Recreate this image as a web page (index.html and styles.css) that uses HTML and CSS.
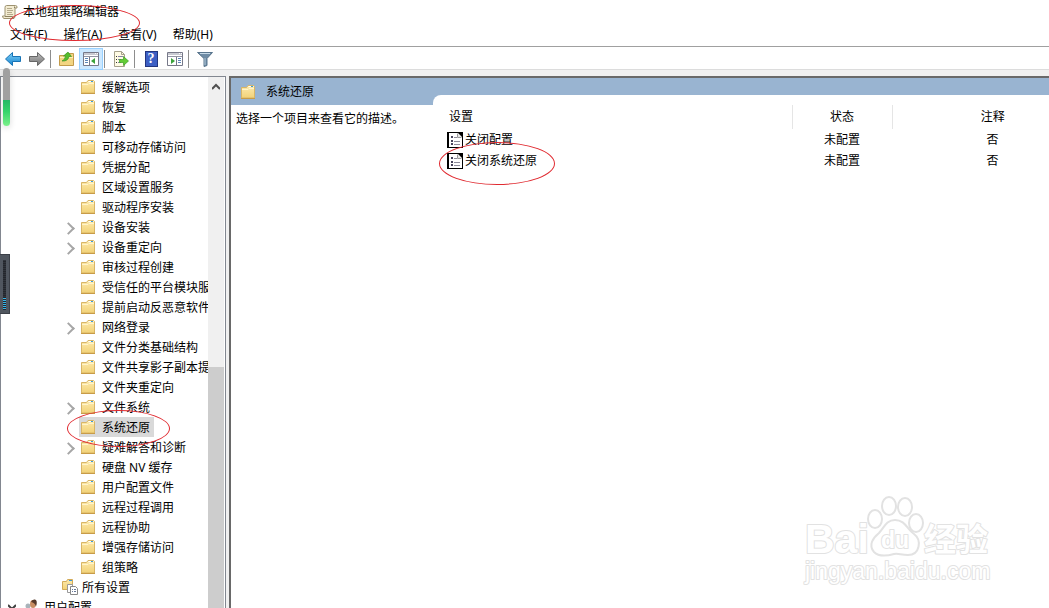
FILE: index.html
```html
<!DOCTYPE html>
<html lang="zh-CN">

<head>
    <meta charset="UTF-8">
    <meta name="viewport" content="width=device-width, initial-scale=1.0">
    <title>本地组策略编辑器</title>
    <link rel="stylesheet" href="styles.css">
</head>

<body>
    <!-- shared icons -->
    <svg class="sprite" aria-hidden="true">
        <defs>
            <linearGradient id="folderFill" x1="0" y1="0" x2="0" y2="1">
                <stop offset="0" stop-color="#fdeaae" />
                <stop offset="1" stop-color="#f2d277" />
            </linearGradient>
            <linearGradient id="blueFill" x1="0" y1="0" x2="0" y2="1">
                <stop offset="0" stop-color="#7fd0f7" />
                <stop offset="1" stop-color="#1583cf" />
            </linearGradient>
            <linearGradient id="grayFill" x1="0" y1="0" x2="0" y2="1">
                <stop offset="0" stop-color="#bdbdbd" />
                <stop offset="1" stop-color="#747474" />
            </linearGradient>
            <symbol id="folder" viewBox="0 0 16 16">
                <path d="M1.500 3.500h5l1.500-2h5.500l1 1v11.500h-13z" fill="url(#folderFill)" stroke="#d8b566" />
                <path d="M8.500 2.500h5" stroke="#fff" />
                <path d="M11 2.500h2" stroke="#3d9bd8" />
                <path d="M2 5.500h6l1-1h5" stroke="#fff4cc" fill="none" />
                <path d="M1 14.500h14" stroke="#c89c48" />
            </symbol>
            <symbol id="policy" viewBox="0 0 16 16">
                <path d="M0 0h16v16h-16z" fill="#000" />
                <path d="M2 1h9l4 4v10h-13z" fill="#fff" />
                <path d="M10.500 1.500v4h4" fill="#e4e4e4" stroke="#999" />
                <path d="M4 4h2v2h-2zM4 8h2v2h-2zM4 11h2v2h-2z" fill="#47445c" />
                <path d="M7 5.500h3M7 9.500h6M7 12.500h6" stroke="#8d8b9b" />
            </symbol>
            <symbol id="arrow" viewBox="0 0 16 16">
                <path d="M.5 8l7-6.500v4h8v5h-8v4z" />
            </symbol>
        </defs>
    </svg>

    <header class="titlebar">
        <svg class="icon" viewBox="0 0 16 16">
            <path d="M4.500 1.500h9q2 0 1.500 2.500h-2v8.500q0 2-2 2h-9q-1.500-.5-1.500-2.500h2.500v-8.500q0-2 1.500-2z" fill="#f3ecd2" stroke="#9d9270" />
            <path d="M12.500 4v-1.500M3 12.500h7.500q0 2 1.500 2" fill="none" stroke="#8b8161" />
            <path d="M5 4.500h5M5 6.500h6M5 8.500h5M5 10.500h6" stroke="#b5ab8c" />
        </svg>
        <h1>本地组策略编辑器</h1>
    </header>

    <nav class="menubar">
        <button type="button">文件(F)</button>
        <button type="button">操作(A)</button>
        <button type="button">查看(V)</button>
        <button type="button">帮助(H)</button>
    </nav>

    <div class="toolbar">
        <button type="button" aria-label="后退"><svg class="icon back"><use href="#arrow" /></svg></button>
        <button type="button" aria-label="前进"><svg class="icon forward"><use href="#arrow" /></svg></button>
        <span class="sep"></span>
        <button type="button" aria-label="上一级">
            <svg class="icon" viewBox="0 0 16 16">
                <path d="M.5 4.500h6l1-2h7v12h-14z" fill="#f3d582" stroke="#c39b4b" />
                <path d="M1 6.500h13" stroke="#fff0bf" />
                <path d="M3 10q3-1 3.500-5h-2l4.500-4 3.500 4.500h-2.500q-1 5-7 4.500z" fill="#55bd2c" stroke="#2e8d1d" stroke-width=".6" />
            </svg>
        </button>
        <button type="button" class="active" aria-label="显示/隐藏控制台树" aria-pressed="true">
            <svg class="icon" viewBox="0 0 16 16">
                <path d="M.5 1.500h15v13h-15z" fill="#fff" stroke="#777989" />
                <path d="M1 3h14M1 5.500h14" stroke="#9294a4" />
                <path d="M12 2.500h1M14 2.500h1" stroke="#fff" />
                <path d="M6.500 6v8" stroke="#777989" />
                <path d="M2 7.500h3M2 9.500h3M2 11.500h3" stroke="#5d86b7" />
                <path d="M12 7v6l-4-3z" fill="#3ba33b" />
            </svg>
        </button>
        <span class="sep"></span>
        <button type="button" aria-label="导出列表">
            <svg class="icon" viewBox="0 0 16 16">
                <path d="M1.500.5h7l3 3v12h-10z" fill="#fffbe4" stroke="#a5a08b" />
                <path d="M8.500.5v3h3" fill="none" stroke="#a5a08b" />
                <path d="M3 5.500h1M3 8.500h1M3 11.500h1" stroke="#333" />
                <path d="M5 5.500h5M5 8.500h3M5 11.500h3" stroke="#8582a5" />
                <path d="M6.500 8.500h4v-3l5 4.500-5 4.500v-3h-4z" fill="#63cc35" stroke="#3c9e25" stroke-width=".7" />
            </svg>
        </button>
        <span class="sep"></span>
        <button type="button" class="help" aria-label="帮助"><span>?</span></button>
        <button type="button" aria-label="显示/隐藏操作窗格">
            <svg class="icon" viewBox="0 0 16 16">
                <path d="M.5 1.500h15v13h-15z" fill="#fff" stroke="#777989" />
                <path d="M1 3h14M1 5.500h14" stroke="#9294a4" />
                <path d="M12 2.500h1M14 2.500h1" stroke="#fff" />
                <path d="M9.500 6v8" stroke="#777989" />
                <path d="M11 7.500h3M11 9.500h3M11 11.500h3" stroke="#5d86b7" />
                <path d="M4 7v6l4-3z" fill="#3ba33b" />
            </svg>
        </button>
        <span class="sep"></span>
        <button type="button" class="filter" aria-label="筛选">
            <svg class="icon" viewBox="0 0 16 16">
                <path d="M.5 1.500h15l-5.500 6v7l-3 1v-8z" fill="#6f8ca5" stroke="#59758d" />
                <path d="M3 2.500h10" stroke="#c7dae8" />
                <path d="M8 7v7" stroke="#b2c8d9" />
            </svg>
        </button>
    </div>

    <main class="console">
        <div class="tree-pane">
            <ul class="tree">
                <li><svg class="icon"><use href="#folder" /></svg><span>缓解选项</span></li>
                <li><svg class="icon"><use href="#folder" /></svg><span>恢复</span></li>
                <li><svg class="icon"><use href="#folder" /></svg><span>脚本</span></li>
                <li><svg class="icon"><use href="#folder" /></svg><span>可移动存储访问</span></li>
                <li><svg class="icon"><use href="#folder" /></svg><span>凭据分配</span></li>
                <li><svg class="icon"><use href="#folder" /></svg><span>区域设置服务</span></li>
                <li><svg class="icon"><use href="#folder" /></svg><span>驱动程序安装</span></li>
                <li class="closed"><svg class="icon"><use href="#folder" /></svg><span>设备安装</span></li>
                <li class="closed"><svg class="icon"><use href="#folder" /></svg><span>设备重定向</span></li>
                <li><svg class="icon"><use href="#folder" /></svg><span>审核过程创建</span></li>
                <li><svg class="icon"><use href="#folder" /></svg><span>受信任的平台模块服务</span></li>
                <li><svg class="icon"><use href="#folder" /></svg><span>提前启动反恶意软件</span></li>
                <li class="closed"><svg class="icon"><use href="#folder" /></svg><span>网络登录</span></li>
                <li><svg class="icon"><use href="#folder" /></svg><span>文件分类基础结构</span></li>
                <li><svg class="icon"><use href="#folder" /></svg><span>文件共享影子副本提供程序</span></li>
                <li><svg class="icon"><use href="#folder" /></svg><span>文件夹重定向</span></li>
                <li class="closed"><svg class="icon"><use href="#folder" /></svg><span>文件系统</span></li>
                <li class="selected"><svg class="icon"><use href="#folder" /></svg><span>系统还原</span></li>
                <li class="closed"><svg class="icon"><use href="#folder" /></svg><span>疑难解答和诊断</span></li>
                <li><svg class="icon"><use href="#folder" /></svg><span>硬盘 NV 缓存</span></li>
                <li><svg class="icon"><use href="#folder" /></svg><span>用户配置文件</span></li>
                <li><svg class="icon"><use href="#folder" /></svg><span>远程过程调用</span></li>
                <li><svg class="icon"><use href="#folder" /></svg><span>远程协助</span></li>
                <li><svg class="icon"><use href="#folder" /></svg><span>增强存储访问</span></li>
                <li><svg class="icon"><use href="#folder" /></svg><span>组策略</span></li>
                <li class="level-2">
                    <svg class="icon" viewBox="0 0 16 16">
                        <path d="M.5 2.500h4l1-2h5v10h-10z" fill="url(#folderFill)" stroke="#d3ab59" />
                        <path d="M7 1.500h3" stroke="#3d9bd8" />
                        <path d="M5.500 5.500h5v8h-5z" fill="#fff" stroke="#999" />
                        <path d="M8.500 7.500h5l2 2v6h-7z" fill="#fff" stroke="#888" />
                        <path d="M10 10.500h1M12 10.500h2M10 12.500h1M12 12.500h2" stroke="#667899" />
                    </svg>
                    <span>所有设置</span>
                </li>
                <li class="level-1">
                    <svg class="twisty" viewBox="0 0 8 8"><path d="M0 2l4 4 4-4" fill="none" stroke="#404040" stroke-width="2" /></svg>
                    <svg class="icon" viewBox="0 0 16 16">
                        <path d="M1 16q0-6 5-6l3 1 4 5z" fill="#5c6975" />
                        <circle cx="4" cy="7" r="2.500" fill="#a9b3ba" />
                        <ellipse cx="9" cy="5" rx="3" ry="4" fill="#c98e62" />
                        <path d="M7 3q1-3 4-2.500 3 1 1 7-1-4-5-4.500z" fill="#563a2a" />
                        <path d="M6 16q0-6 4-6t5 6z" fill="#79553d" />
                    </svg>
                    <span>用户配置</span>
                </li>
            </ul>
            <div class="scrollbar">
                <svg viewBox="0 0 8 8"><path d="M0 6l4-4 4 4" fill="none" stroke="#505050" stroke-width="2" /></svg>
                <div class="thumb"></div>
            </div>
        </div>

        <section class="detail-pane">
            <h2><svg class="icon"><use href="#folder" /></svg>系统还原</h2>
            <div class="detail-body">
                <p class="description">选择一个项目来查看它的描述。</p>
                <div class="list">
                    <table>
                        <thead>
                            <tr>
                                <th class="name">设置</th>
                                <th class="state">状态</th>
                                <th class="note">注释</th>
                            </tr>
                        </thead>
                        <tbody>
                            <tr>
                                <td class="name"><svg class="icon"><use href="#policy" /></svg>关闭配置</td>
                                <td class="state">未配置</td>
                                <td class="note">否</td>
                            </tr>
                            <tr>
                                <td class="name"><svg class="icon"><use href="#policy" /></svg>关闭系统还原</td>
                                <td class="state">未配置</td>
                                <td class="note">否</td>
                            </tr>
                        </tbody>
                    </table>
                </div>
            </div>
        </section>
    </main>

    <div class="meter"></div>
    <div class="volume"><span></span></div>

    <div class="mark mark-title"></div>
    <div class="mark mark-tree"></div>
    <div class="mark mark-list"></div>

    <svg class="watermark" viewBox="0 0 200 100">
        <text class="latin" x="5" y="63" font-size="41">Bai</text>
        <ellipse cx="75" cy="29" rx="7" ry="9" />
        <ellipse cx="89" cy="16" rx="7" ry="9" />
        <ellipse cx="105" cy="17" rx="7" ry="9" />
        <ellipse cx="116" cy="33" rx="7" ry="9" />
        <path d="M95 30C105 30 107 39 114 44C122 50 120 65 108 65C101 65 98 63 94 64C87 66 79 67 74 62C68 55 73 48 79 43C84 38 86 30 95 30Z" />
        <text class="latin" x="81" y="58" font-size="23">du</text>
        <text class="cjk" x="124" y="61" font-size="32">经验</text>
        <text class="url" x="5" y="89" font-size="23">jingyan.baidu.com</text>
    </svg>
</body>

</html>
```
FILE: styles.css
```css
* {
    margin: 0;
    padding: 0;
    box-sizing: border-box;
}

body {
    position: relative;
    display: flex;
    flex-direction: column;
    height: 100vh;
    overflow: hidden;
    background-color: #fff;
    color: #000;
    font: 12px/20px "Noto Sans", "Noto Sans CJK SC", sans-serif;
}

button {
    border: none;
    background: none;
    color: inherit;
    font: inherit;
}

.sprite {
    position: absolute;
    width: 0;
    height: 0;
}

.icon {
    display: block;
    flex: none;
    width: 16px;
    height: 16px;
}

.titlebar {
    display: flex;
    align-items: center;
    gap: 5px;
    height: 24px;
    padding: 0 2px;
}

.titlebar h1 {
    font-size: 12px;
    font-weight: normal;
}

.menubar {
    display: flex;
    gap: 16px;
    height: 23px;
    padding-left: 10px;
    border-bottom: 1px solid #a0a0a0;
}

/* toolbar */
.toolbar {
    display: flex;
    align-items: center;
    height: 23px;
    padding: 1px 0 0 1px;
    border-bottom: 1px solid #dcdcdc;
}

.toolbar button {
    display: flex;
    align-items: center;
    justify-content: center;
    width: 24px;
    height: 22px;
}

.toolbar .active {
    border: 1px solid #99d1ff;
    background-color: #cce8ff;
}

.toolbar .sep {
    width: 1px;
    height: 18px;
    margin: 0 2px 0 1px;
    background-color: #8d8d8d;
}

.toolbar .sep + button {
    margin-left: 2px;
}

.back {
    fill: url(#blueFill);
    stroke: #1873b5;
}

.forward {
    fill: url(#grayFill);
    stroke: #666;
    transform: scaleX(-1);
}

.help span {
    width: 13px;
    height: 16px;
    border: 1px solid #22357f;
    background-color: #3d5fc4;
    color: #fff;
    font: bold 14px/14px "Liberation Serif", serif;
}

/* console */
.console {
    display: flex;
    flex: 1;
    gap: 3px;
    min-height: 0;
    padding-top: 6px;
    background-color: #f0f0f0;
}

.tree-pane {
    display: flex;
    flex: none;
    width: 226px;
    padding-right: 1px;
    border: 1px solid #828790;
    border-bottom: none;
    background-color: #fff;
}

.tree {
    flex: 1;
    min-width: 0;
    overflow: hidden;
    list-style: none;
}

.tree li {
    position: relative;
    display: flex;
    align-items: center;
    height: 20px;
    padding-left: 79px;
    white-space: nowrap;
}

.tree span {
    padding: 1px 4px 0 6px;
}

.tree .level-2 {
    padding-left: 61px;
}

.tree .level-2 span {
    padding-left: 4px;
}

.tree .level-1 {
    gap: 8px;
    padding-left: 7px;
}

.tree .level-1 span {
    margin-left: -4px;
    padding-left: 0;
}

.twisty {
    width: 8px;
    height: 8px;
}

.closed::before {
    content: "";
    position: absolute;
    left: 63px;
    top: 7px;
    width: 7px;
    height: 7px;
    border: solid #a6a6a6;
    border-width: 2px 2px 0 0;
    transform: rotate(45deg);
}

.selected::before {
    content: "";
    position: absolute;
    left: 78px;
    top: 0;
    width: 75px;
    height: 20px;
    background-color: #d9d9d9;
}

.selected > * {
    position: relative;
}

.scrollbar {
    display: flex;
    flex-direction: column;
    align-items: center;
    width: 16px;
    padding-top: 6px;
    background-color: #f0f0f0;
}

.scrollbar svg {
    width: 8px;
    height: 8px;
}

.thumb {
    width: 100%;
    height: 46%;
    margin-top: auto;
    background-color: #cdcdcd;
}

/* details */
.detail-pane {
    display: flex;
    flex: 1;
    flex-direction: column;
    min-width: 0;
    border-top: 2px solid #696969;
    border-left: 2px solid #696969;
    background-color: #fff;
}

.detail-pane h2 {
    display: flex;
    align-items: center;
    gap: 10px;
    height: 27px;
    padding-left: 9px;
    background-color: #99b4d1;
    font-size: 12px;
    font-weight: normal;
}

.detail-body {
    display: flex;
    flex: 1;
}

.description {
    flex: none;
    width: 202px;
    padding: 4px 0 0 5px;
}

.list {
    flex: 1;
    margin-top: -10px;
    padding-top: 10px;
    border-top-left-radius: 8px;
    background-color: #fff;
}

table {
    width: 100%;
    table-layout: fixed;
    border-collapse: collapse;
}

th {
    height: 24px;
    font-weight: normal;
}

td {
    height: 21px;
}

th.name {
    padding-left: 16px;
    text-align: left;
}

td.name {
    display: flex;
    align-items: center;
    gap: 2px;
    padding-left: 14px;
}

.state {
    width: 100px;
    text-align: center;
}

th.state {
    border: solid #e5e5e5;
    border-width: 0 1px;
}

.note {
    width: 157px;
    padding-left: 44px;
    text-align: center;
}

/* desktop widgets on the left edge */
.meter {
    position: absolute;
    left: 3px;
    top: 68px;
    width: 7px;
    height: 58px;
    border-radius: 4px;
    background: linear-gradient(#a0a0a0 55%, #25b765 55%, #35d46b 75%, #7af08a);
    box-shadow: 0 2px 6px rgba(0, 0, 0, .15);
}

.volume {
    position: absolute;
    left: 0;
    top: 254px;
    width: 10px;
    height: 60px;
    padding: 5px 3px;
    border: 1px solid #3c4048;
    border-left: none;
    background-color: #50565f;
}

.volume span {
    display: block;
    height: 50px;
    background: repeating-linear-gradient(transparent 0 1px, #23262c 1px 2px), linear-gradient(#30343b 74%, #35b5e8 74%);
}

/* red circles */
.mark {
    position: absolute;
    border: 1px solid #e02a30;
    border-radius: 50%;
}

.mark-title {
    left: 9px;
    top: 5px;
    width: 131px;
    height: 36px;
}

.mark-tree {
    left: 67px;
    top: 410px;
    width: 103px;
    height: 37px;
}

.mark-list {
    left: 439px;
    top: 142px;
    width: 116px;
    height: 43px;
}

.watermark {
    position: absolute;
    right: 49px;
    bottom: 18px;
    width: 200px;
    height: 100px;
    fill: #fff;
    stroke: #e2e2e2;
    stroke-width: 2px;
    stroke-linejoin: round;
}

.watermark text {
    paint-order: stroke;
}

.watermark .latin {
    font-family: "Liberation Sans", sans-serif;
    font-weight: bold;
}

.watermark .cjk {
    font-family: "Noto Sans CJK SC", sans-serif;
    font-weight: bold;
}

.watermark .url {
    font-family: "Liberation Sans", sans-serif;
}
```
